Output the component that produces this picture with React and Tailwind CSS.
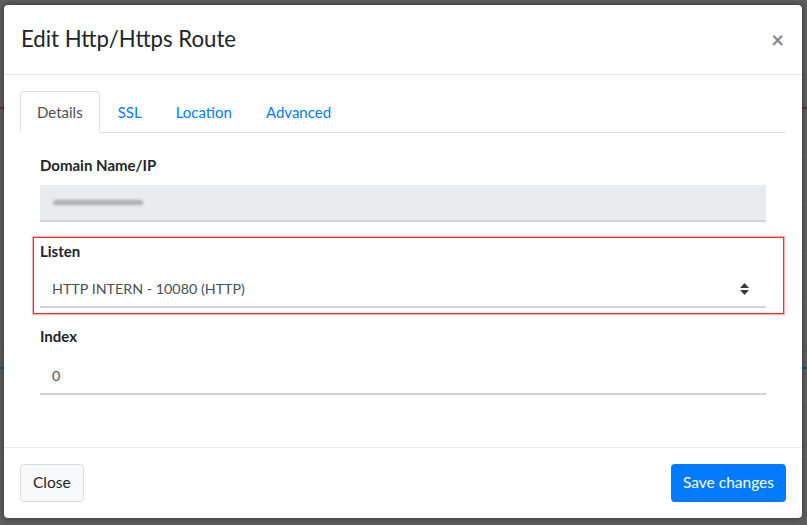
import React from 'react';

const font = { fontFamily: 'Lato, "Open Sans", sans-serif' };

const BackdropRows = () => (
  <div className="flex flex-col">
    <div className="h-[107px]" />
    <div className="h-[2px] bg-[#6b2a2a]" />
    <div className="h-[47px] border-b border-[#6a6a6a]" />
    <div className="h-[49px] border-b border-[#6a6a6a]" />
    <div className="h-[49px] border-b border-[#6a6a6a]" />
    <div className="h-[49px] border-b border-[#6a6a6a]" />
    <div className="h-[49px] border-b border-[#555]" />
    <div className="h-[15px]" />
    <div className="h-[2px] bg-[#1f4e8c]" />
    <div className="h-[33px] border-b border-[#6a6a6a]" />
    <div className="h-[55px] border-b border-[#6a6a6a]" />
  </div>
);

const Field = ({ label, children }) => (
  <div>
    <div className="text-[15px] font-bold text-[#212529] leading-[20px] mb-[10px]">{label}</div>
    {children}
  </div>
);

const App = () => {
  return (
    <div className="relative w-[807px] h-[525px] overflow-hidden bg-[#5f5f5f]" style={font}>
      <BackdropRows />

      <div className="absolute left-[4px] top-[5px] w-[798px] h-[513px] bg-white rounded-[4px] shadow-[0_0_6px_rgba(0,0,0,0.5)] flex flex-col">
        {/* header */}
        <div className="h-[70px] border-b border-[#e5e5e5] flex items-center justify-between pl-[17px] pr-[18px]">
          <h5 className="text-[22.2px] text-[#212529] leading-none">Edit Http/Https Route</h5>
          <button className="text-[22px] font-bold text-[#888] leading-none">×</button>
        </div>

        {/* body */}
        <div className="flex-1 px-[16px] pt-[16px]">
          <div className="flex border-b border-[#dee2e6] text-[15px]">
            <div className="h-[42px] pt-[1px] px-[16px] flex items-center border border-[#dee2e6] border-b-white -mb-px rounded-t-[4px] text-[#495057] bg-white">
              Details
            </div>
            <div className="h-[41px] pt-[1px] px-[18px] flex items-center text-[#007bff]">SSL</div>
            <div className="h-[41px] pt-[1px] px-[16px] flex items-center text-[#007bff]">Location</div>
            <div className="h-[41px] pt-[1px] px-[18px] flex items-center text-[#007bff]">Advanced</div>
          </div>

          <div className="px-[20px] pt-[22px] flex flex-col">
            <Field label="Domain Name/IP">
              <div className="h-[37px] bg-[#e9ecef] border-b-2 border-[#ced4da] flex items-center px-[13px]">
                <div className="w-[90px] h-[5px] rounded-full bg-[#a9acaf] blur-[1.5px]" />
              </div>
            </Field>

            <div className="mt-[15px] -ml-[7px] -mr-[18px] border border-[#ff2a2a] shadow-[0_0_1px_1px_rgba(255,80,80,0.45)] pl-[6px] pr-[17px] pt-[3px] pb-[5px]">
              <Field label="Listen">
                <div className="h-[37px] border-b-2 border-[#ced4da] flex items-center justify-between px-[12px] text-[14.3px] text-[#495057]">
                  <span>HTTP INTERN - 10080 (HTTP)</span>
                  <svg width="9" height="12" viewBox="0 0 9 12" className="mr-[5px]">
                    <path d="M4.5 0 L9 5 H0 Z" fill="#343a40" />
                    <path d="M4.5 12 L9 7 H0 Z" fill="#343a40" />
                  </svg>
                </div>
              </Field>
            </div>

            <div className="mt-[12px]">
              <Field label="Index">
                <div className="h-[39px] pt-[2px] border-b-2 border-[#ced4da] flex items-center px-[12px] text-[14.3px] text-[#495057]">
                  0
                </div>
              </Field>
            </div>
          </div>
        </div>

        {/* footer */}
        <div className="h-[71px] border-t border-[#e9ecef] flex items-center justify-between px-[16px]">
          <button className="h-[38px] px-[12px] rounded-[4px] bg-[#f8f9fa] border border-[#dcdcdc] text-[15.5px] text-[#212529]">
            Close
          </button>
          <button className="h-[38px] px-[12px] rounded-[4px] bg-[#007bff] text-[15.5px] text-white">
            Save changes
          </button>
        </div>
      </div>
    </div>
  );
};

export default App;
